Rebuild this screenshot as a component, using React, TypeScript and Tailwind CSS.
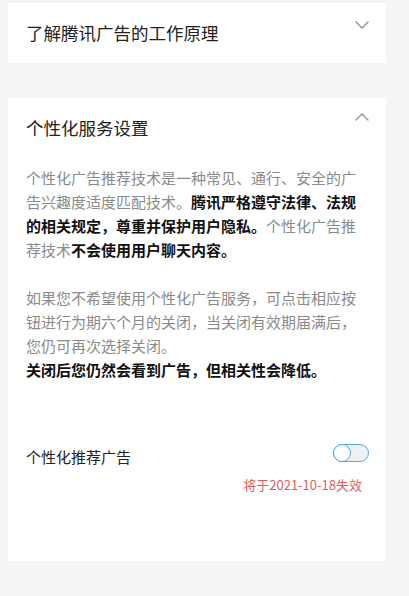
import React from "react";

const font = {
  fontFamily: '"Noto Sans CJK SC", Roboto, "Noto Sans", sans-serif',
};

function Chevron({ up }: { up?: boolean }) {
  return (
    <svg width="14" height="8" viewBox="0 0 14 8" fill="none" className="shrink-0">
      <path
        d={up ? "M1 7 L7 1 L13 7" : "M1 1 L7 7 L13 1"}
        stroke="#8c8c8c"
        strokeWidth="1.3"
        strokeLinecap="round"
        strokeLinejoin="round"
      />
    </svg>
  );
}

function Toggle() {
  return (
    <div className="relative h-[18px] w-[36px] shrink-0 rounded-full border-[1.5px] border-[#4fa9ee] bg-[#f0f0f0]">
      <div className="absolute -left-[1.5px] -top-[1.5px] h-[18px] w-[18px] rounded-full border-[1.5px] border-[#4fa9ee] bg-white" />
    </div>
  );
}

export default function App() {
  return (
    <div className="min-h-screen bg-[#f5f5f5] pt-[3px] pl-[8px] pr-[23px] pb-[36px]" style={font}>
      {/* Card: how it works */}
      <div className="flex justify-between bg-white pl-[18px] pr-[17px] pt-[16px] pb-[18px]">
        <div className="mt-[2px] text-[17.5px] leading-[24px] text-[#222]">了解腾讯广告的工作原理</div>
        <div className="pt-[2px]">
          <Chevron />
        </div>
      </div>

      {/* Card: personalized settings */}
      <div className="mt-[35px] bg-white pl-[18px] pr-[17px] pt-[15px] pb-[66px]">
        <div className="flex justify-between">
          <div className="mt-[3px] text-[17.5px] leading-[24px] text-[#222]">个性化服务设置</div>
          <Chevron up />
        </div>

        <p className="mt-[26px] w-[338px] text-[15px] leading-[24px] text-[#8a8a8a]">
          个性化广告推荐技术是一种常见、通行、安全的广告兴趣度适度匹配技术。
          <span className="font-bold text-[#111]">腾讯严格遵守法律、法规的相关规定，尊重并保护用户隐私。</span>
          个性化广告推荐技术
          <span className="font-bold text-[#111]">不会使用用户聊天内容。</span>
        </p>

        <p className="mt-[24px] w-[338px] text-[15px] leading-[24px] text-[#8a8a8a]">
          如果您不希望使用个性化广告服务，可点击相应按钮进行为期六个月的关闭，当关闭有效期届满后，您仍可再次选择关闭。
          <br />
          <span className="font-bold text-[#111]">关闭后您仍然会看到广告，但相关性会降低。</span>
        </p>

        <div className="mt-[62px] flex items-start justify-between">
          <div className="mt-[1px] text-[15px] leading-[24px] text-[#222]">个性化推荐广告</div>
          <Toggle />
        </div>
        <div className="mt-[6px] pr-[7px] text-right text-[13px] leading-[20px] text-[#e35d5d]">
          将于2021-10-18失效
        </div>
      </div>
    </div>
  );
}
